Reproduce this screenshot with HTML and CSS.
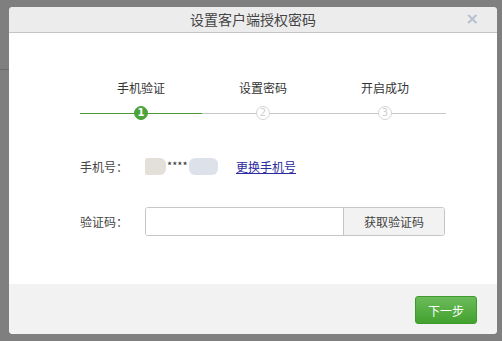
FILE: index.html
```html
<!DOCTYPE html>
<html lang="zh-CN">
<head>
  <meta charset="UTF-8">
  <title>设置客户端授权密码</title>
  <link rel="stylesheet" href="styles.css">
</head>
<body>
<div class="page-line"></div>
<div class="dialog">
  <div class="dialog-head">
    <span class="dialog-title">设置客户端授权密码</span>
    <span class="dialog-close">×</span>
  </div>
  <div class="dialog-body">
    <div class="steps">
      <div class="step active">
        <div class="step-name">手机验证</div>
        <div class="step-bar"><span class="step-num">1</span></div>
      </div>
      <div class="step">
        <div class="step-name">设置密码</div>
        <div class="step-bar"><span class="step-num">2</span></div>
      </div>
      <div class="step">
        <div class="step-name">开启成功</div>
        <div class="step-bar"><span class="step-num">3</span></div>
      </div>
    </div>
    <div class="form-row phone-row">
      <span class="form-label">手机号：</span>
      <span class="phone">
        <span class="blur blur-a"></span><span class="stars">****</span><span class="blur blur-b"></span>
      </span>
      <a class="change-link" href="#">更换手机号</a>
    </div>
    <div class="form-row code-row">
      <span class="form-label">验证码：</span>
      <div class="code-group">
        <input class="code-input" type="text">
        <button class="code-btn">获取验证码</button>
      </div>
    </div>
  </div>
  <div class="dialog-foot">
    <button class="next-btn">下一步</button>
  </div>
</div>
</body>
</html>
```

FILE: styles.css
```css
html, body {
  margin: 0;
  padding: 0;
  height: 100%;
}
body {
  background: #7f7f7f;
  font-family: "Noto Sans CJK SC", "Noto Sans", sans-serif;
  font-size: 12px;
  color: #333;
  overflow: hidden;
  position: relative;
}
.page-line {
  position: absolute;
  left: 0;
  top: 69px;
  width: 9px;
  height: 1px;
  background: #6c6c6c;
}
.dialog {
  position: absolute;
  left: 9px;
  top: 7px;
  width: 488px;
  height: 327px;
  background: #fff;
  border-radius: 4px;
  display: flex;
  flex-direction: column;
  overflow: hidden;
}
.dialog-head {
  height: 25px;
  background: #ececec;
  border-bottom: 1px solid #c4c4c4;
  display: flex;
  align-items: center;
  justify-content: center;
  position: relative;
  flex: none;
}
.dialog-title {
  font-size: 14px;
  color: #444;
  line-height: 25px;
}
.dialog-close {
  position: absolute;
  right: 18px;
  top: 3px;
  font-size: 16px;
  line-height: 18px;
  color: #b4c0cf;
  font-family: "DejaVu Sans", sans-serif;
  font-weight: bold;
}
.dialog-body {
  flex: 1;
  padding: 47px 51px 0 71px;
}
.steps {
  display: flex;
  width: 366px;
}
.step {
  flex: 1;
  text-align: center;
}
.step-name {
  font-size: 12px;
  line-height: 16px;
  color: #333;
}
.step-bar {
  margin-top: 9px;
  height: 16px;
  position: relative;
  display: flex;
  align-items: center;
  justify-content: center;
}
.step-bar::before {
  content: "";
  position: absolute;
  left: 0;
  right: 0;
  top: 8px;
  height: 1px;
  background: #c8c8c8;
}
.step.active .step-bar::before {
  background: #4a9a38;
}
.step-num {
  position: relative;
  width: 14px;
  height: 14px;
  border-radius: 50%;
  box-sizing: border-box;
  border: 1px solid #d4d4d4;
  background: #fff;
  color: #d0d0d0;
  font-size: 10px;
  line-height: 12px;
  font-family: "DejaVu Sans", sans-serif;
  text-align: center;
}
.step.active .step-num {
  background: #4aa33b;
  border-color: #4aa33b;
  color: #fff;
  font-weight: bold;
}
.form-row {
  display: flex;
  align-items: center;
}
.form-label {
  width: 65px;
  font-size: 12px;
  color: #444;
}
.phone-row {
  margin-top: 35px;
  height: 20px;
}
.phone {
  display: flex;
  align-items: center;
  width: 91px;
}
.blur {
  display: inline-block;
  height: 17px;
}
.blur-a {
  width: 21px;
  background: #e2e0d8;
  border-radius: 2px 6px 6px 2px;
}
.blur-b {
  width: 29px;
  background: #dde2ea;
  border-radius: 6px;
}
.stars {
  font-size: 11px;
  line-height: 12px;
  color: #333;
  margin: 0 1px;
  align-self: flex-start;
  margin-top: 1px;
}
.change-link {
  color: #2a2aa0;
  text-decoration: underline;
  font-size: 12px;
}
.code-row {
  margin-top: 31px;
}
.code-group {
  display: flex;
  height: 29px;
  width: 300px;
  border: 1px solid #c6c6c6;
  border-radius: 3px;
  box-sizing: border-box;
  overflow: hidden;
}
.code-input {
  flex: 1;
  border: none;
  outline: none;
  padding: 0 6px;
  margin: 0;
  font: inherit;
}
.code-btn {
  width: 101px;
  border: none;
  border-left: 1px solid #c6c6c6;
  background: #f2f2f2;
  color: #444;
  font: inherit;
  font-size: 12px;
  padding: 0;
  margin: 0;
}
.dialog-foot {
  height: 50px;
  background: #f2f2f2;
  display: flex;
  align-items: center;
  justify-content: flex-end;
  padding-right: 20px;
  flex: none;
}
.next-btn {
  width: 62px;
  height: 28px;
  border: 1px solid #3f9a2e;
  border-radius: 3px;
  background: linear-gradient(#6bbb5a, #43a22f);
  color: #fff;
  font: inherit;
  font-size: 12px;
  padding: 0;
  margin-top: 2px;
}
```
